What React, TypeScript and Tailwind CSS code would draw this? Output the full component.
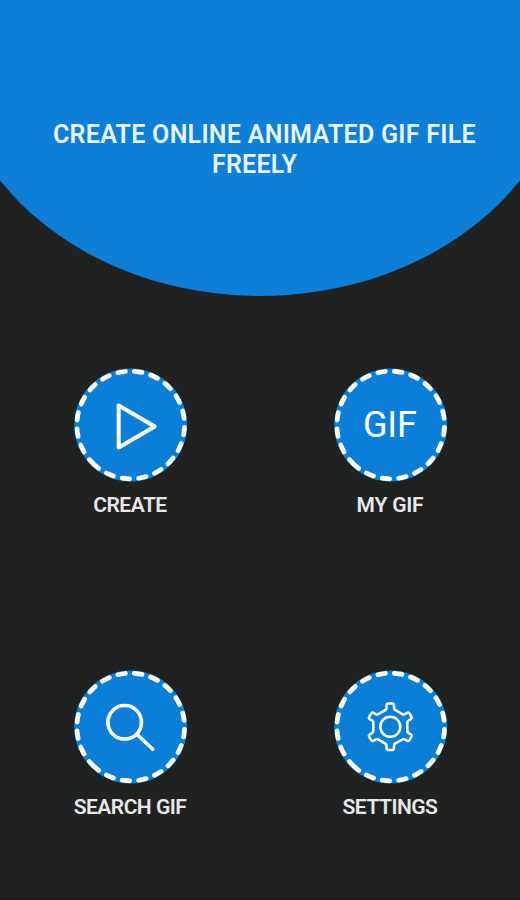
import type { ReactNode } from 'react'

// degrees of the ring: twelve dashes, one long one, then seven more (round caps add about 5 to each)
const RING_DASHES = [
  ...Array.from({ length: 12 }, () => '8.2 9.5'),
  '13.8 9.7',
  ...Array.from({ length: 7 }, () => '8.2 9.5'),
].join(' ')

const GEAR_TOOTH =
  'M-4.6 -17Q-3.7 -17.8 -3.7 -19V-21.2Q-3.7 -23.3 -1.7 -23.3H1.7Q3.7 -23.3 3.7 -21.2V-19Q3.7 -17.8 4.6 -17L12.4 -12.5'

function PlayIcon() {
  return <path d="M45 37.5V79.5L81 58.5Z" stroke="white" strokeWidth="4" strokeLinejoin="round" fill="none" />
}

function GifIcon() {
  return (
    <text x="56.2" y="69.3" textAnchor="middle" textLength="54" fill="white" className="font-['Roboto'] text-[36px]">
      GIF
    </text>
  )
}

function SearchIcon() {
  return (
    <g stroke="white" strokeWidth="3.6" strokeLinecap="round" fill="none">
      <circle cx="51" cy="52.3" r="16.8" />
      <path d="M63.5 64.5L79 79.3" />
    </g>
  )
}

function GearIcon() {
  return (
    <g transform="translate(56.6 56.8)" stroke="white" strokeWidth="2.5" strokeLinecap="round" fill="none">
      {[0, 60, 120, 180, 240, 300].map(angle => (
        <path key={angle} d={GEAR_TOOTH} transform={`rotate(${angle})`} />
      ))}
      <circle r="10" />
    </g>
  )
}

const ACTIONS: { label: string; icon: ReactNode; spacing: string }[] = [
  { label: 'CREATE', icon: <PlayIcon />, spacing: 'tracking-[-0.5px]' },
  { label: 'MY GIF', icon: <GifIcon />, spacing: 'tracking-[-0.2px]' },
  { label: 'SEARCH GIF', icon: <SearchIcon />, spacing: 'tracking-[-0.5px]' },
  { label: 'SETTINGS', icon: <GearIcon />, spacing: 'tracking-[-0.5px]' },
]

function ActionButton({ label, icon, spacing }: { label: string; icon: ReactNode; spacing: string }) {
  return (
    <button className="flex flex-col items-center">
      <svg width="114" height="114" viewBox="-0.7 0 114 114" className="overflow-visible">
        <circle cx="57" cy="57" r="56.5" fill="#0b7fd7" />
        <circle
          cx="57" cy="57" r="53.8"
          pathLength="360"
          transform="rotate(-86 57 57)"
          stroke="white" strokeWidth="4.7" strokeLinecap="round" strokeDasharray={RING_DASHES} fill="none"
        />
        {icon}
      </svg>
      <span className={`mt-[11px] text-[21px] leading-6 font-semibold whitespace-nowrap text-[#e8e8e8] ${spacing}`}>{label}</span>
    </button>
  )
}

export default function App() {
  return (
    <div className="flex h-[900px] w-[520px] flex-col overflow-hidden border-b border-[#1c1418] bg-[#202221] font-['Roboto',sans-serif]">
      <header className="flex h-[296px] shrink-0 flex-col items-center justify-end overflow-hidden">
        <div className="flex h-[508px] w-[620px] shrink-0 flex-col items-center rounded-[50%] bg-[#0d7fd7] pt-[332px]">
          <h1 className="flex flex-col items-center text-[25px] leading-[29.5px] font-semibold tracking-[0.28px] whitespace-nowrap text-[#e9f4fd]">
            <span className="pl-[9px]">CREATE ONLINE ANIMATED GIF FILE</span>
            <span className="pr-[11px]">FREELY</span>
          </h1>
        </div>
      </header>

      <main className="grid grid-cols-2 gap-y-[153px] pt-[72px]">
        {ACTIONS.map(action => (
          <ActionButton key={action.label} {...action} />
        ))}
      </main>
    </div>
  )
}
